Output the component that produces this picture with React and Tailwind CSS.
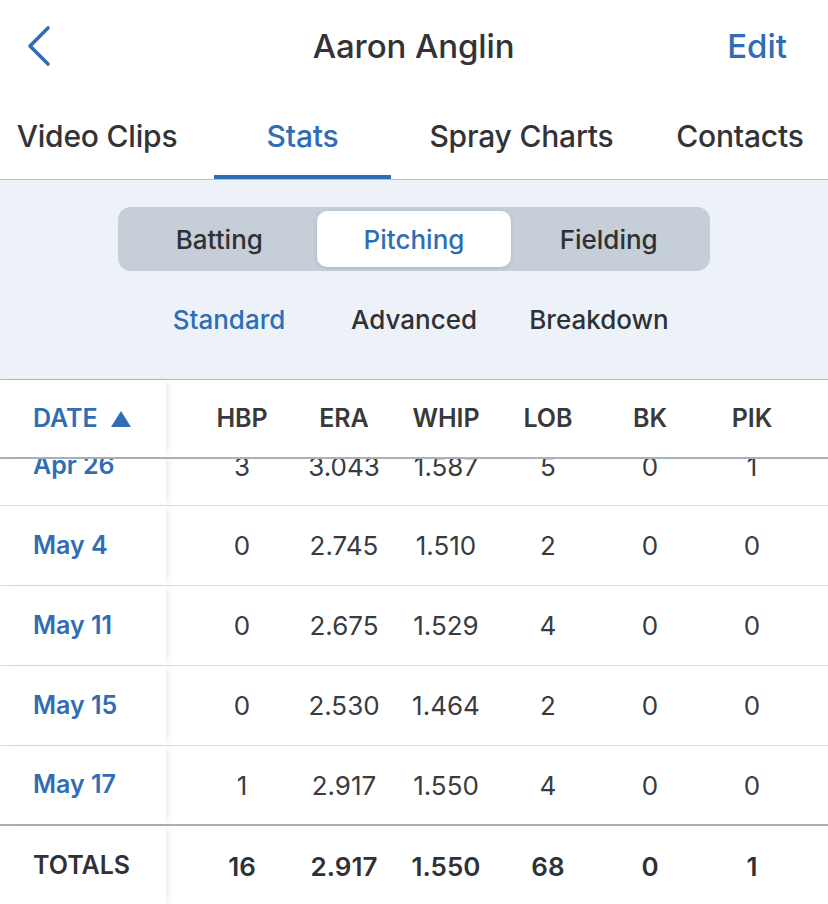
import React, { useState } from "react";

const tabs = [
  { label: "Video Clips", w: "w-[194px]" },
  { label: "Stats", w: "w-[177px] ml-[20px]" },
  { label: "Spray Charts", w: "w-[221px] ml-[20px]" },
  { label: "Contacts", w: "w-[176px] ml-[20px]" },
];

const columns = ["HBP", "ERA", "WHIP", "LOB", "BK", "PIK"];

const rows = [
  { date: "May 4", values: ["0", "2.745", "1.510", "2", "0", "0"] },
  { date: "May 11", values: ["0", "2.675", "1.529", "4", "0", "0"] },
  { date: "May 15", values: ["0", "2.530", "1.464", "2", "0", "0"] },
  { date: "May 17", values: ["1", "2.917", "1.550", "4", "0", "0"] },
];

const totals = ["16", "2.917", "1.550", "68", "0", "1"];

function DateCell({ children, className = "" }) {
  // sticky-looking first column with soft shadow on the right
  return (
    <div
      className={`relative z-10 w-[166px] shrink-0 h-full flex items-center pl-[33px] bg-white shadow-[5px_0_6px_-3px_rgba(60,80,110,0.12)] ${className}`}
    >
      {children}
    </div>
  );
}

function ValueCells({ values, className = "" }) {
  return (
    <div className="flex pl-[25px]">
      {values.map((v, i) => (
        <div key={i} className={`w-[102px] text-center ${className}`}>
          {v}
        </div>
      ))}
    </div>
  );
}

export default function App() {
  const [tab] = useState("Stats");
  const [segment] = useState("Pitching");
  const [sub] = useState("Standard");

  return (
    <div className="w-[828px] h-[904px] overflow-hidden bg-white text-[#333336] font-['Inter',sans-serif]">
      {/* nav bar */}
      <div className="h-[94px] flex items-center justify-between pl-[26px] pr-[41px]">
        <svg width="28" height="42" viewBox="0 0 28 42" className="mt-[-2px]">
          <path
            d="M22 3 L4 21 L22 39"
            fill="none"
            stroke="#2f6db5"
            strokeWidth="3.6"
            strokeLinecap="round"
            strokeLinejoin="round"
          />
        </svg>
        <div className="text-[33px] font-medium tracking-[-0.1px] ml-[46px]">Aaron Anglin</div>
        <div className="text-[33px] font-medium text-[#2f6db5]">Edit</div>
      </div>

      {/* tabs */}
      <div className="h-[86px] flex border-b border-[#b6bec8]">
        {tabs.map((t) => (
          <div
            key={t.label}
            className={`${t.w} shrink-0 relative flex items-center justify-center text-[30px] font-medium tracking-[-0.2px] ${
              t.label === tab ? "text-[#2f6db5]" : ""
            }`}
          >
            {t.label}
            {t.label === tab && (
              <div className="absolute left-0 right-0 bottom-0 h-[4px] bg-[#2f6db5]" />
            )}
          </div>
        ))}
      </div>

      {/* filter panel */}
      <div className="bg-[#edf2f8] pt-[27px] pb-[35px] border-b border-[#aeb6c0]">
        <div className="mx-auto w-[592px] h-[64px] rounded-[13px] bg-[#c6ced8] p-[4px] flex">
          {["Batting", "Pitching", "Fielding"].map((s) => (
            <div
              key={s}
              className={`flex-1 flex items-center justify-center rounded-[10px] text-[26px] font-medium ${
                s === segment
                  ? "bg-white text-[#2f6db5] shadow-[0_1px_4px_rgba(0,0,0,0.12)]"
                  : "text-[#2f3136]"
              }`}
            >
              {s}
            </div>
          ))}
        </div>
        <div className="mt-[23px] h-[50px] flex justify-center">
          {["Standard", "Advanced", "Breakdown"].map((s) => (
            <div
              key={s}
              className={`w-[185px] flex items-center justify-center text-[26px] font-medium ${
                s === sub ? "text-[#2f6db5]" : "text-[#2f3136]"
              }`}
            >
              {s}
            </div>
          ))}
        </div>
      </div>

      {/* table header */}
      <div className="h-[79px] flex items-center border-b-2 border-[#a9b1ba]">
        <DateCell className="text-[#2f6db5] text-[25px] font-semibold gap-[12px]">
          DATE
          <svg width="22" height="18" viewBox="0 0 22 18">
            <path d="M11 1 L21 17 L1 17 Z" fill="#2f6db5" />
          </svg>
        </DateCell>
        <ValueCells values={columns} className="text-[25px] font-semibold text-[#38393d]" />
      </div>

      {/* partially scrolled row */}
      <div className="h-[47px] overflow-hidden border-b border-[#dcdfe4]">
        <div className="h-[80px] mt-[-33px] flex items-center">
          <DateCell className="text-[#2f6db5] text-[25px] font-semibold">Apr 26</DateCell>
          <ValueCells values={["3", "3.043", "1.587", "5", "0", "1"]} className="text-[26px] text-[#3a3b3f]" />
        </div>
      </div>

      {rows.map((r, i) => (
        <div
          key={r.date}
          className={`h-[80px] flex items-center ${
            i === rows.length - 1 ? "border-b-2 border-[#a9b1ba]" : "border-b border-[#dcdfe4]"
          }`}
        >
          <DateCell className="text-[#2f6db5] text-[25px] font-semibold">{r.date}</DateCell>
          <ValueCells values={r.values} className="text-[26px] text-[#3a3b3f]" />
        </div>
      ))}

      {/* totals */}
      <div className="h-[80px] flex items-center">
        <DateCell className="text-[25px] font-semibold text-[#2f3136]">TOTALS</DateCell>
        <ValueCells values={totals} className="text-[26px] font-semibold text-[#2f3136]" />
      </div>
    </div>
  );
}
